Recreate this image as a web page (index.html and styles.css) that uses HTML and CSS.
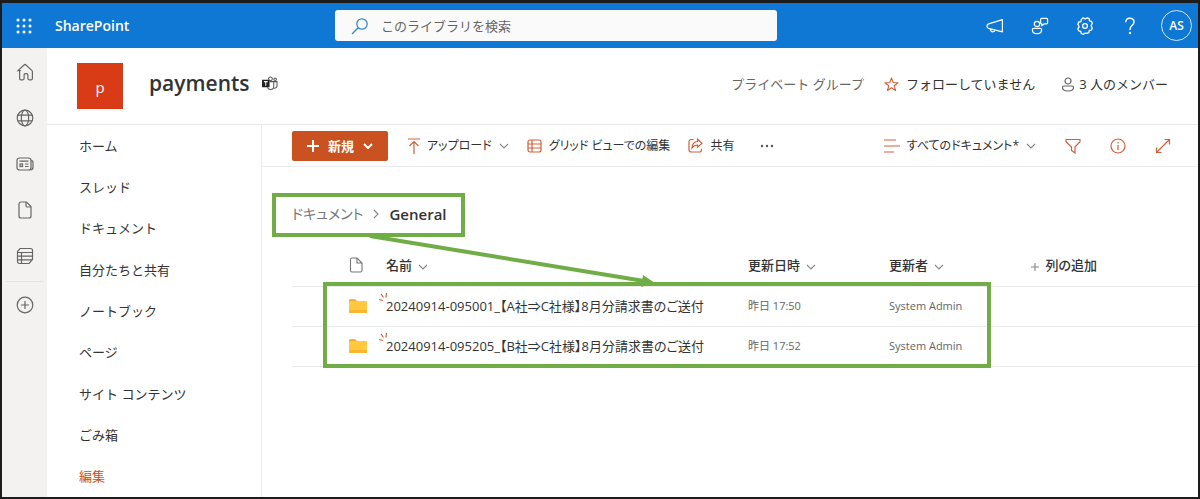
FILE: index.html
```html
<!DOCTYPE html>
<html lang="ja">
<head>
    <meta charset="UTF-8">
    <meta name="viewport" content="width=device-width, initial-scale=1">
    <title>payments - General</title>
    <link rel="stylesheet" href="styles.css">
</head>
<body>
    <header class="suite-bar">
        <button class="waffle" aria-label="アプリ起動ツール">
            <svg width="16" height="16" viewBox="0 0 16 16" fill="currentColor">
                <circle cx="2" cy="2" r="1.5"/><circle cx="8" cy="2" r="1.5"/><circle cx="14" cy="2" r="1.5"/>
                <circle cx="2" cy="8" r="1.5"/><circle cx="8" cy="8" r="1.5"/><circle cx="14" cy="8" r="1.5"/>
                <circle cx="2" cy="14" r="1.5"/><circle cx="8" cy="14" r="1.5"/><circle cx="14" cy="14" r="1.5"/>
            </svg>
        </button>
        <a href="#" class="brand">SharePoint</a>
        <label class="search">
            <svg width="18" height="18" viewBox="0 0 18 18" fill="none" stroke="#3a87cc" stroke-width="1.3">
                <circle cx="11" cy="7" r="5.2"/><path d="M7.2 10.8L1 17"/>
            </svg>
            <input type="text" placeholder="このライブラリを検索" aria-label="このライブラリを検索">
        </label>
        <div class="suite-actions">
            <button aria-label="お知らせ">
                <svg width="18" height="18" viewBox="0 0 18 18" fill="none" stroke="currentColor" stroke-width="1.2" stroke-linejoin="round">
                    <path d="M16.4 2.6v12.2L2.6 11.4c-1.2-.3-1.6-1.1-1.6-2.2s.5-1.9 1.6-2.3z"/><path d="M4.4 12c.1 1.8 1.2 2.8 2.5 2.8 1 0 1.8-.6 2.1-1.6"/>
                </svg>
            </button>
            <button aria-label="チャット">
                <svg width="18" height="18" viewBox="0 0 18 18" fill="none" stroke="currentColor" stroke-width="1.2" stroke-linejoin="round">
                    <circle cx="6" cy="7" r="2.7"/><path d="M2.8 11.4h6.4c.9 0 1.4.5 1.4 1.3 0 2.5-1.9 4-4.6 4s-4.6-1.5-4.6-4c0-.8.5-1.3 1.4-1.3z"/>
                    <path d="M9.6 2.4c0-.6.4-1 1-1h5c.6 0 1 .4 1 1v3.4c0 .6-.4 1-1 1h-2.2l-2.6 2V6.8c-.8 0-1.2-.4-1.2-1z"/>
                </svg>
            </button>
            <button aria-label="設定">
                <svg width="18" height="18" viewBox="0 0 18 18" fill="none" stroke="currentColor" stroke-width="1.3" stroke-linejoin="round">
                    <path d="M7 1l2 1.200L11 1l2 .900.300 2.100 2 .500.800 2-1.200 2.500 1.200 2.300-.900 2-2.100.400-.4 2.100-2.100.800L9 16.300l-1.900 1.200-2-.800-.500-2.200-2-.400-.900-2 1.200-2.300L1.700 7.300l.9-2.100 2.100-.4.400-2.100z" transform="translate(.2 -.2)"/>
                    <circle cx="9" cy="9" r="2.4"/>
                </svg>
            </button>
            <button aria-label="ヘルプ">
                <svg width="18" height="18" viewBox="0 0 18 18" fill="none" stroke="currentColor" stroke-width="1.4">
                    <path d="M4.8 5.2c0-2.5 1.7-4 4-4s4.2 1.5 4.2 3.8c0 3.5-4 3.6-4 7.2v.8"/><circle cx="9" cy="16" r=".5"/>
                </svg>
            </button>
            <button class="avatar">AS</button>
        </div>
    </header>

    <div class="shell">
        <nav class="app-rail" aria-label="アプリ バー">
            <a href="#" aria-label="ホーム">
                <svg width="18" height="18" viewBox="0 0 18 18"><path d="M2 7.6L8 2c.6-.6 1.4-.6 2 0l6 5.6c.3.3.4.6.4 1v6.9c0 .8-.5 1.3-1.3 1.3h-2c-.7 0-1.2-.5-1.2-1.2V12c0-.9-.5-1.4-1.4-1.4h-1c-.9 0-1.4.5-1.4 1.4v3.6c0 .7-.5 1.2-1.2 1.2h-2c-.8 0-1.3-.5-1.3-1.3V8.6c0-.4.1-.7.4-1z"/></svg>
            </a>
            <a href="#" aria-label="サイト">
                <svg width="18" height="18" viewBox="0 0 18 18"><circle cx="9" cy="9" r="7.8"/><ellipse cx="9" cy="9" rx="3.7" ry="7.8"/><path d="M1.8 6.2h14.4M1.8 11.8h14.4"/></svg>
            </a>
            <a href="#" aria-label="ニュース">
                <svg width="18" height="18" viewBox="0 0 18 18"><rect x="1" y="3" width="14" height="12" rx="2.5"/><path d="M15 5.5c1.2 0 2 .6 2 1.8v5c0 1.7-1 2.7-2.7 2.7M3.5 6.2h9M9 9h3.5M9 11.5h3.5"/><rect x="4" y="9" width="2.5" height="2.5"/></svg>
            </a>
            <a href="#" aria-label="ファイル">
                <svg width="18" height="18" viewBox="0 0 18 18"><path d="M5 1h5.5L15 5.5V15c0 1.2-.8 2-2 2H5c-1.2 0-2-.8-2-2V3c0-1.2.8-2 2-2z"/><path d="M10 1.2v3.6c0 .8.4 1.2 1.2 1.2h3.6"/></svg>
            </a>
            <a href="#" aria-label="リスト">
                <svg width="18" height="18" viewBox="0 0 18 18"><path d="M4 1.5h10.5c1.2 0 2 .8 2 2v9l-3.5 4H3.5c-1.2 0-2-.8-2-2V4.5z"/><path d="M1.5 5.5h15M1.5 9.2h15M1.5 12.8H16M5.5 5.5v11"/></svg>
            </a>
            <hr>
            <a href="#" aria-label="作成">
                <svg width="18" height="18" viewBox="0 0 18 18"><circle cx="9" cy="9" r="7.8"/><path d="M9 5v8M5 9h8"/></svg>
            </a>
        </nav>

        <div class="site">
            <div class="site-header">
                <div class="site-logo">p</div>
                <h1>payments</h1>
                <svg class="teams" width="16" height="15" viewBox="0 0 17 16" fill="none" stroke="#555" stroke-width="1.1">
                    <circle cx="9" cy="3" r="2"/><circle cx="14" cy="3.5" r="1.4"/>
                    <path d="M8 6h4.5v5c0 2-1.5 3.5-3.5 3.5-1.5 0-2.8-.9-3.3-2.3M12.5 6H16v4c0 1.7-1.2 3-3.5 3"/>
                    <rect x="0" y="4" width="8" height="8" fill="#222" stroke="none"/><path d="M2 6h4M4 6v4.5" stroke="#fff"/>
                </svg>
                <div class="site-info">
                    <span class="privacy">プライベート グループ</span>
                    <button class="follow">
                        <svg width="15" height="15" viewBox="0 0 15 15" fill="none" stroke="#d0603a" stroke-width="1.1" stroke-linejoin="round"><path d="M7.5 1l1.7 4.5 4.8.2-3.8 3 1.3 4.8-4-2.7-4 2.7 1.3-4.8-3.8-3 4.800-.2z"/></svg>
                        フォローしていません
                    </button>
                    <a href="#" class="members">
                        <svg width="14" height="15" viewBox="0 0 14 15" fill="none" stroke="#666" stroke-width="1.2"><circle cx="7" cy="4" r="3"/><path d="M2.8 9h8.4c.8 0 1.3.5 1.3 1.2 0 2.4-2.3 3.8-5.5 3.8s-5.5-1.4-5.5-3.8c0-.7.5-1.2 1.3-1.2z"/></svg>
                        3 人のメンバー
                    </a>
                </div>
            </div>

            <div class="site-body">
                <nav class="site-nav" aria-label="サイト ナビゲーション">
                    <a href="#">ホーム</a>
                    <a href="#">スレッド</a>
                    <a href="#">ドキュメント</a>
                    <a href="#">自分たちと共有</a>
                    <a href="#">ノートブック</a>
                    <a href="#">ページ</a>
                    <a href="#">サイト コンテンツ</a>
                    <a href="#">ごみ箱</a>
                    <a href="#" class="edit">編集</a>
                </nav>

                <main class="library">
                    <div class="command-bar">
                        <button class="new-btn">
                            <svg width="12" height="12" viewBox="0 0 12 12"><path d="M6 0v12M0 6h12"/></svg>
                            新規
                            <svg width="10" height="6" viewBox="0 0 10 6"><path d="M1 1l4 4 4-4"/></svg>
                        </button>
                        <button class="cmd">
                            <svg class="accent" width="12" height="16" viewBox="0 0 12 16"><path d="M0 1h12M6 16V3.5M1.5 8L6 3.5 10.5 8"/></svg>
                            アップロード
                            <svg class="chevron" width="10" height="6" viewBox="0 0 10 6"><path d="M1 1l4 4 4-4"/></svg>
                        </button>
                        <button class="cmd">
                            <svg class="accent" width="15" height="14" viewBox="0 0 15 14"><rect x="1" y="1" width="13" height="12" rx="2"/><path d="M1 5h13M1 9h13M5 1v12"/></svg>
                            グリッド ビューでの編集
                        </button>
                        <button class="cmd">
                            <svg class="accent" width="15" height="15" viewBox="0 0 15 15"><path d="M5.5 1.500H3.200C2 1.500 1 2.400 1 3.600v8.200C1 13 2 14 3.200 14h8.200c1.200 0 2.100-1 2.100-2.200v-1"/><path d="M9.500 1.200l4.500 4-4.500 4V7C7 7 5.500 7.800 4 9.800c.2-3.500 2-6 5.500-6.300z"/></svg>
                            共有
                        </button>
                        <button class="cmd more" aria-label="その他">
                            <svg width="14" height="4" viewBox="0 0 14 4" fill="#555"><circle cx="2" cy="2" r="1.2"/><circle cx="7" cy="2" r="1.2"/><circle cx="12" cy="2" r="1.2"/></svg>
                        </button>
                        <div class="view-tools">
                            <button class="cmd">
                                <svg class="accent" width="16" height="14" viewBox="0 0 16 14"><path d="M0 1h12M0 7h16M0 13h10"/></svg>
                                すべてのドキュメント*
                                <svg class="chevron" width="10" height="6" viewBox="0 0 10 6"><path d="M1 1l4 4 4-4"/></svg>
                            </button>
                            <button class="cmd" aria-label="フィルター">
                                <svg class="accent" width="16" height="16" viewBox="0 0 16 16"><path d="M1 1.5h14v2.2L10 9v6l-3.5-2.5V9L1 3.7z"/></svg>
                            </button>
                            <button class="cmd" aria-label="詳細">
                                <svg class="accent" width="16" height="16" viewBox="0 0 16 16"><circle cx="8" cy="8" r="7"/><path d="M8 7v5M8 4v1.5"/></svg>
                            </button>
                            <button class="cmd" aria-label="展開">
                                <svg class="accent" width="16" height="16" viewBox="0 0 16 16"><path d="M1.5 14.5l13-13M9.5 1.5h5v5M1.5 9.5v5h5"/></svg>
                            </button>
                        </div>
                    </div>

                    <div class="breadcrumb">
                        <a href="#">ドキュメント</a>
                        <svg class="chevron" width="6" height="10" viewBox="0 0 6 10"><path d="M1 1l4 4-4 4"/></svg>
                        <strong>General</strong>
                    </div>

                    <div class="file-list">
                        <table>
                            <colgroup>
                                <col class="col-icon"><col class="col-name"><col class="col-date"><col class="col-user"><col>
                            </colgroup>
                            <thead>
                                <tr>
                                    <th class="type"><svg width="14" height="16" viewBox="0 0 14 16" fill="none" stroke="#777" stroke-width="1.1"><path d="M3 1h5l5 5v7.5c0 .9-.6 1.5-1.5 1.5H3c-.9 0-1.5-.6-1.5-1.5v-11C1.5 1.6 2.100 1 3 1zM8 1v5h5"/></svg></th>
                                    <th>名前 <svg class="chevron" width="10" height="6" viewBox="0 0 10 6"><path d="M1 1l4 4 4-4"/></svg></th>
                                    <th>更新日時 <svg class="chevron" width="10" height="6" viewBox="0 0 10 6"><path d="M1 1l4 4 4-4"/></svg></th>
                                    <th>更新者 <svg class="chevron" width="10" height="6" viewBox="0 0 10 6"><path d="M1 1l4 4 4-4"/></svg></th>
                                    <th><svg class="chevron plus" width="8" height="8" viewBox="0 0 8 8"><path d="M4 0v8M0 4h8"/></svg> 列の追加</th>
                                </tr>
                            </thead>
                            <tbody>
                                <tr>
                                    <td class="type"><svg width="18" height="14" viewBox="0 0 18 14"><path d="M0 1.5C0 .7.5.3 1.2.3h5l2 2H17c.6 0 1 .4 1 1V6H0z" fill="#eda52c"/><rect y="2" width="18" height="12" rx="1" fill="#ffc83d"/><path d="M0 11h18v2c0 .6-.4 1-1 1H1c-.6 0-1-.4-1-1z" fill="#fdb52e"/></svg></td>
                                    <td><a href="#"><svg class="new-mark" width="9" height="9" viewBox="0 0 9 9"><path d="M2 1l2.5 3.5M7.5 0L7 4.500M0 6.500l4 1"/></svg>20240914-095001_【A社⇒C社様】8月分請求書のご送付</a></td>
                                    <td class="meta">昨日 17:50</td>
                                    <td class="meta">System Admin</td>
                                    <td></td>
                                </tr>
                                <tr>
                                    <td class="type"><svg width="18" height="14" viewBox="0 0 18 14"><path d="M0 1.5C0 .7.5.3 1.2.3h5l2 2H17c.6 0 1 .4 1 1V6H0z" fill="#eda52c"/><rect y="2" width="18" height="12" rx="1" fill="#ffc83d"/><path d="M0 11h18v2c0 .6-.4 1-1 1H1c-.6 0-1-.4-1-1z" fill="#fdb52e"/></svg></td>
                                    <td><a href="#"><svg class="new-mark" width="9" height="9" viewBox="0 0 9 9"><path d="M2 1l2.5 3.5M7.5 0L7 4.500M0 6.500l4 1"/></svg>20240914-095205_【B社⇒C社様】8月分請求書のご送付</a></td>
                                    <td class="meta">昨日 17:52</td>
                                    <td class="meta">System Admin</td>
                                    <td></td>
                                </tr>
                            </tbody>
                        </table>
                        <!-- callout from the folder path to its files -->
                        <div class="callout-box"></div>
                        <svg class="callout-arrow" width="290" height="56" viewBox="0 0 290 56">
                            <path d="M2 1L276 46" stroke="#70ad47" stroke-width="4"/><path d="M275 40l12 8-14 4z" fill="#70ad47"/>
                        </svg>
                    </div>
                </main>
            </div>
        </div>
    </div>
</body>
</html>
```

FILE: styles.css
```css
* {
    box-sizing: border-box;
}

body {
    margin: 0;
    min-height: 100vh;
    display: flex;
    flex-direction: column;
    border: 2px solid #1c1c1c;
    border-top-width: 3px;
    background: #fff;
    color: #333;
    font-family: "Open Sans", "Noto Sans CJK JP", sans-serif;
    font-size: 13px;
    line-height: 20px;
}

a {
    color: inherit;
    text-decoration: none;
}

button {
    display: flex;
    align-items: center;
    padding: 0;
    border: none;
    background: none;
    color: inherit;
    font: inherit;
    white-space: nowrap;
    cursor: pointer;
}

svg {
    flex: none;
}

/* Top bar */
.suite-bar {
    display: flex;
    align-items: center;
    height: 45px;
    padding: 0 6px 0 14px;
    background: #0f78d4;
    color: #fff;
}

.brand {
    width: 258px;
    margin-left: 23px;
    font-size: 14px;
    font-weight: 600;
}

.search {
    display: flex;
    align-items: center;
    gap: 12px;
    flex: 0 1 442px;
    height: 31px;
    margin-left: 22px;
    padding: 0 16px;
    border-radius: 3px;
    background: #fafafa;
}

.search input {
    flex: 1;
    min-width: 0;
    padding: 0;
    border: none;
    outline: none;
    background: none;
    font: inherit;
}

.search input::placeholder {
    color: #666;
    opacity: 1;
}

.suite-actions {
    display: flex;
    align-items: center;
    gap: 27px;
    margin-left: auto;
}

.avatar {
    justify-content: center;
    width: 31px;
    height: 31px;
    margin-left: -5px;
    border: 1px solid #cfe4f7;
    border-radius: 50%;
    font-size: 12px;
    font-weight: 600;
}

.shell {
    display: flex;
    flex: 1;
}

/* Left icons */
.app-rail {
    display: flex;
    flex-direction: column;
    align-items: center;
    width: 45px;
    padding-top: 1px;
    background: #f3f2f1;
}

.app-rail a {
    display: flex;
    align-items: center;
    height: 46px;
}

.app-rail hr {
    width: 37px;
    margin: 2px 0 0;
    border: none;
    border-top: 1px solid #e6e4e3;
}

.app-rail svg {
    fill: none;
    stroke: #666;
    stroke-width: 1.2;
}

.site {
    display: flex;
    flex-direction: column;
    flex: 1;
    min-width: 0;
}

/* Site title */
.site-header {
    display: flex;
    align-items: center;
    height: 77px;
    padding: 0 30px;
    border-bottom: 1px solid #e8e8e8;
}

.site-logo {
    width: 46px;
    height: 46px;
    background: #da3b17;
    color: #fff;
    font-size: 15px;
    line-height: 48px;
    text-align: center;
}

.site-header h1 {
    margin: 0 12px 6px 26px;
    font-size: 21px;
    line-height: 28px;
    font-weight: 600;
}

.teams {
    margin-bottom: 6px;
}

.site-info {
    display: flex;
    align-items: center;
    gap: 20px;
    margin: 0 0 4px auto;
}

.privacy {
    color: #666;
}

.follow,
.members {
    display: flex;
    align-items: center;
    gap: 7px;
}

.members {
    gap: 4px;
    margin-left: 6px;
}

.site-body {
    display: flex;
    flex: 1;
}

.site-nav {
    display: grid;
    grid-auto-rows: 1fr;
    align-items: center;
    width: 215px;
    padding-left: 32px;
    border-right: 1px solid #ececec;
}

.site-nav .edit {
    color: #ca5127;
}

/* Library */
.library {
    flex: 1;
    min-width: 0;
    font-feature-settings: "palt";
}

.command-bar {
    display: flex;
    align-items: center;
    gap: 18px;
    height: 42px;
    padding: 0 27px 0 30px;
    border-bottom: 1px solid #ececec;
}

.cmd {
    gap: 7px;
    font-size: 12px;
}

.cmd.more {
    margin-left: 8px;
}

.new-btn {
    gap: 9px;
    height: 30px;
    margin-right: 2px;
    padding: 0 15px;
    border-radius: 2px;
    background: #ca5120;
    color: #fff;
    font-weight: 600;
}

.new-btn svg {
    fill: none;
    stroke: #fff;
    stroke-width: 2;
}

.accent {
    fill: none;
    stroke: #d0603a;
    stroke-width: 1.2;
}

.chevron {
    fill: none;
    stroke: #888;
    stroke-width: 1.1;
}

.view-tools {
    display: flex;
    align-items: center;
    gap: 29px;
    margin-left: auto;
}

.breadcrumb {
    display: inline-flex;
    align-items: center;
    gap: 10px;
    height: 44px;
    margin: 26px 0 0 10px;
    padding: 0 14px 2px 16px;
    border: 4px solid #70ad47;
    font-size: 14px;
    vertical-align: top;
}

.breadcrumb a {
    color: #777;
}

.breadcrumb strong {
    font-size: 15px;
    font-weight: 600;
}

.file-list {
    position: relative;
    margin: 8px 0 0 30px;
}

.file-list table {
    width: 100%;
    table-layout: fixed;
    border-collapse: collapse;
}

.col-icon {
    width: 94px;
}

.col-name {
    width: 362px;
}

.col-date {
    width: 141px;
}

.col-user {
    width: 142px;
}

.file-list th {
    height: 41px;
    font-weight: 500;
}

.file-list td {
    height: 40px;
}

.file-list th,
.file-list td {
    padding: 0;
    border-bottom: 1px solid #ececec;
    text-align: left;
    white-space: nowrap;
}

.file-list th .chevron {
    margin: 0 3px;
    vertical-align: middle;
}

.file-list th .plus {
    margin-left: 0;
}

.file-list .type {
    padding-left: 57px;
}

.file-list .type svg {
    display: block;
}

.file-list td a {
    position: relative;
}

.file-list .meta {
    color: #666;
    font-size: 11px;
}

.new-mark {
    position: absolute;
    left: -7px;
    top: -4px;
    fill: none;
    stroke: #d0603a;
    stroke-width: 1.2;
}

.callout-box {
    position: absolute;
    left: 31px;
    top: 37px;
    width: 668px;
    height: 86px;
    border: 4px solid #70ad47;
}

.callout-arrow {
    position: absolute;
    left: 76px;
    top: -10px;
}
```
